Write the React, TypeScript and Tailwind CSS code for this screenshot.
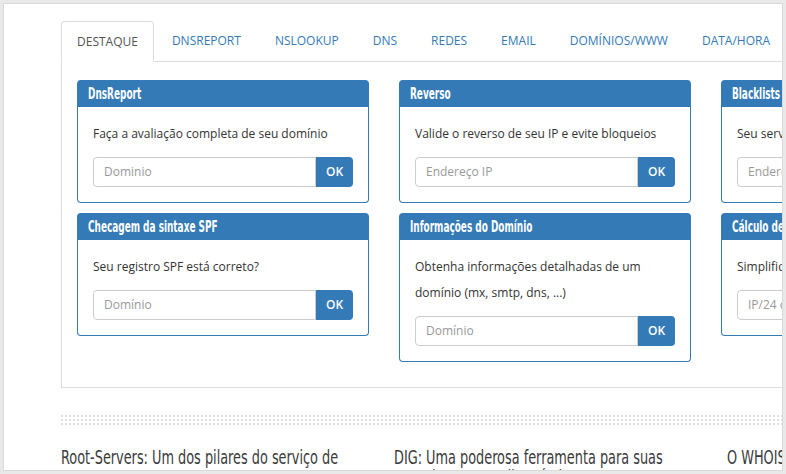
import type { ReactNode } from "react";

const TABS = [
  "DESTAQUE",
  "DNSREPORT",
  "NSLOOKUP",
  "DNS",
  "REDES",
  "EMAIL",
  "DOMÍNIOS/WWW",
  "DATA/HORA",
];

type Tool = {
  title: string;
  text: ReactNode;
  placeholder: string;
};

const COLUMNS: Tool[][] = [
  [
    {
      title: "DnsReport",
      text: "Faça a avaliação completa de seu domínio",
      placeholder: "Dominio",
    },
    {
      title: "Checagem da sintaxe SPF",
      text: "Seu registro SPF está correto?",
      placeholder: "Domínio",
    },
  ],
  [
    {
      title: "Reverso",
      text: "Valide o reverso de seu IP e evite bloqueios",
      placeholder: "Endereço IP",
    },
    {
      title: "Informações do Domínio",
      text: "Obtenha informações detalhadas de um domínio (mx, smtp, dns, ...)",
      placeholder: "Domínio",
    },
  ],
  [
    {
      title: "Blacklists",
      text: "Seu servidor está em alguma blacklist?",
      placeholder: "Endereço IP",
    },
    {
      title: "Cálculo de Sub-rede",
      text: "Simplifique o cálculo de sub-redes",
      placeholder: "IP/24 ou IP/255.255.255.0",
    },
  ],
];

const ARTICLES = [
  "Root-Servers: Um dos pilares do serviço de DNS",
  "DIG: Uma poderosa ferramenta para suas consultas DNS e diagnósticos",
  "O WHOIS e a identificação dos responsáveis por um domínio",
];

// sem Oswald offline: DejaVu Condensed comprimido na horizontal
const condensed = "font-['DejaVu_Sans_Condensed',sans-serif]";

function ToolCard({ tool }: { tool: Tool }) {
  return (
    <div className="mb-[10px]">
      <div className="flex h-[27px] items-center overflow-hidden rounded-t-[4px] bg-[#337ab7] pl-[11px]">
        <span
          className={`inline-block origin-left scale-x-[0.62] whitespace-nowrap text-[16px] font-bold text-white ${condensed}`}
        >
          {tool.title}
        </span>
      </div>
      <div className="rounded-b-[4px] border border-t-0 border-[#337ab7] px-[15px] pt-[14px] pb-[15px]">
        <p className="mb-[10px] text-[12px] leading-[26px] text-[#333]">
          {tool.text}
        </p>
        <div className="flex h-[30px]">
          <input
            placeholder={tool.placeholder}
            className="min-w-0 flex-1 rounded-l-[4px] border border-[#ccc] px-[10px] text-[12px] text-[#555] outline-none placeholder:text-[#999]"
          />
          <button
            type="button"
            className="w-[37px] rounded-r-[4px] bg-[#337ab7] text-[12px] font-semibold text-white"
          >
            OK
          </button>
        </div>
      </div>
    </div>
  );
}

export default function App() {
  return (
    <div className="h-[474px] w-[786px] bg-[#e9e9e9] p-[3px] font-['Open_Sans',sans-serif]">
      <div className="h-full overflow-hidden border border-[#dadada] bg-white pt-[17px] pl-[57px]">
        <div className="w-[1000px]">
          {/* abas */}
          <ul className="flex">
            {TABS.map((tab, i) =>
              i === 0 ? (
                <li
                  key={tab}
                  className="relative z-10 -mb-px mr-[2px] flex h-[41px] items-center rounded-t-[4px] border border-[#ddd] border-b-transparent bg-white px-[15px] text-[12px] text-[#555]"
                >
                  {tab}
                </li>
              ) : (
                <li
                  key={tab}
                  className="mr-[2px] flex h-[40px] items-center px-[16px] text-[12px] text-[#337ab7]"
                >
                  {tab}
                </li>
              ),
            )}
          </ul>

          <div className="border border-[#ddd] pt-[18px] pb-[15px] pl-[15px]">
            <div className="grid grid-cols-[292px_292px_292px] gap-x-[30px]">
              {COLUMNS.map((col, i) => (
                <div key={i}>
                  {col.map((tool) => (
                    <ToolCard key={tool.title} tool={tool} />
                  ))}
                </div>
              ))}
            </div>
          </div>

          {/* separador pontilhado */}
          <div className="mt-[27px] h-[10px] bg-[conic-gradient(at_2px_2px,transparent_75%,#dedede_0)] bg-[length:4px_4px]" />

          <div className="mt-[22px] grid grid-cols-[303px_303px_303px] gap-x-[30px]">
            {ARTICLES.map((a) => (
              <div key={a} className="w-[303px] overflow-visible">
                <h3
                  className={`w-[424px] origin-left scale-x-[0.715] text-[20px] leading-[20px] text-[#3a3a3a] ${condensed}`}
                >
                  {a}
                </h3>
              </div>
            ))}
          </div>
        </div>
      </div>
    </div>
  );
}
